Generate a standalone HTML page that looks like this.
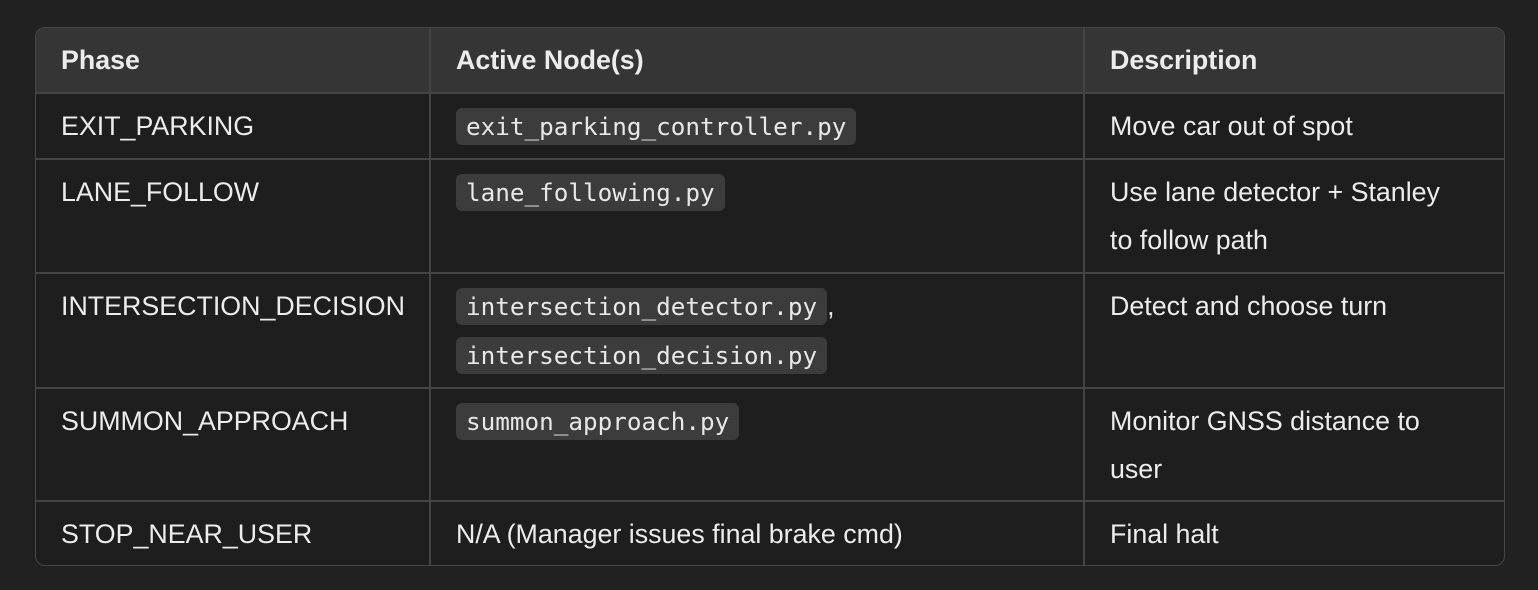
<!DOCTYPE html>
<html><head><meta charset="utf-8"><style>
html,body{margin:0;padding:0;background:#212121;width:1538px;height:590px;overflow:hidden}
.wrap{position:absolute;left:35px;top:27px;width:1468px;border:1px solid #474747;border-radius:10px;overflow:hidden;background:#1e1e1e}
table{border-collapse:collapse;width:100%;table-layout:fixed;font-family:"Liberation Sans",sans-serif;font-size:26.8px;color:#ececec}
td,th{padding:8px 25px 7px;line-height:48px;vertical-align:top;text-align:left;border-right:2px solid #444;border-bottom:2px solid #444}
td:last-child,th:last-child{border-right:none;padding-right:36px}
tr:last-child td{border-bottom:none}
th{background:#353535;font-weight:bold;padding-top:8px;padding-bottom:8px}
code{font-family:"DejaVu Sans Mono","Liberation Mono",monospace;font-size:24.3px;background:#3c3c3c;border-radius:6px;padding:4px 10px;color:#e8e8e8}
</style></head><body>
<div class="wrap"><table>
<colgroup><col style="width:394px"><col style="width:654px"><col></colgroup>
<tr><th>Phase</th><th>Active Node(s)</th><th>Description</th></tr>
<tr><td>EXIT_PARKING</td><td><code>exit_parking_controller.py</code></td><td>Move car out of spot</td></tr>
<tr><td>LANE_FOLLOW</td><td><code>lane_following.py</code><br>&nbsp;</td><td>Use lane detector + Stanley<br>to follow path</td></tr>
<tr><td>INTERSECTION_DECISION</td><td><code>intersection_detector.py</code>,<br><code>intersection_decision.py</code></td><td>Detect and choose turn</td></tr>
<tr><td>SUMMON_APPROACH</td><td><code>summon_approach.py</code></td><td>Monitor GNSS distance to<br>user</td></tr>
<tr><td>STOP_NEAR_USER</td><td>N/A (Manager issues final brake cmd)</td><td>Final halt</td></tr>
</table></div>
</body></html>
